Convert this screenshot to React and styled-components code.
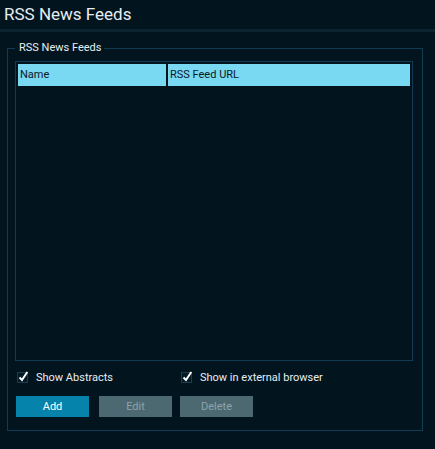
import React from 'react'
import styled, { createGlobalStyle, css } from 'styled-components'

const theme = {
    bg: '#02151f',
    strip: '#0b2430',
    border: '#0f3c52',
    head: '#79d8f2',
    text: '#e6eef2',
    dark: '#0b1826',
    primary: '#0683aa',
    disabled: '#4c6971',
    disabledText: '#8ea3a9',
}

const Global = createGlobalStyle`
    html, body {
        margin: 0;
        background: ${theme.bg};
    }
    body {
        font-family: Roboto, 'Liberation Sans', sans-serif;
        color: ${theme.text};
    }
`

const Page = styled.div`
    width: 435px;
    min-height: 449px;
    background: ${theme.bg};
    overflow: hidden;
`

const Header = styled.header`
    height: 29px;
    line-height: 29px;
    padding-left: 4px;
    font-size: 17px;
    border-bottom: 3px solid ${theme.strip};
`

const Group = styled.fieldset`
    box-sizing: border-box;
    width: 416px;
    margin: 10px 0 0 7px;
    padding: 7px 9px 13px 7px;
    border: 1px solid ${theme.border};
    min-width: 0;

    legend {
        padding: 0 3px 0 4px;
        font-size: 11px;
        line-height: 12px;
    }
`

const Table = styled.div`
    box-sizing: border-box;
    height: 300px;
    border: 1px solid ${theme.border};
    padding: 2px;
`

const HeadRow = styled.div`
    display: grid;
    grid-template-columns: 148px 1fr;
    column-gap: 2px;
    height: 22px;
`

const HeadCell = styled.div`
    background: ${theme.head};
    color: ${theme.dark};
    font-size: 11px;
    line-height: 22px;
    padding-left: 2px;
`

const Options = styled.div`
    display: flex;
    margin: 11px 0 0 2px;
    height: 11px;
`

const Option = styled.label`
    display: flex;
    align-items: center;
    gap: 8px;
    width: ${props => props.$width || 'auto'};
    font-size: 11px;
    line-height: 11px;
`

const Box = styled.span`
    position: relative;
    box-sizing: border-box;
    width: 11px;
    height: 11px;
    border: 1px solid #1c3b4b;
    background: #031a25;

    svg {
        position: absolute;
        left: 0;
        top: -3px;
    }
`

const Buttons = styled.div`
    display: flex;
    gap: 8px;
    margin-top: 13px;
    margin-left: 1px;
`

const Button = styled.button`
    width: 73px;
    height: 21px;
    border: none;
    padding: 0;
    font-family: Roboto, 'Liberation Sans', sans-serif;
    font-size: 11px;
    background: ${theme.disabled};
    color: ${theme.disabledText};
    ${props =>
        props.$primary &&
        css`
            background: ${theme.primary};
            color: #ffffff;
            margin-right: 2px;
        `};
`

const Check = ({ label, width }) => (
    <Option $width={width}>
        <Box>
            <svg width="11" height="12" viewBox="0 0 11 12">
                <path d="M1.5 7.5 L4 10 L9.3 2" fill="none" stroke="#ffffff" strokeWidth="2" />
            </svg>
        </Box>
        {label}
    </Option>
)

export default function App() {
    return (
        <Page>
            <Global />
            <Header>RSS News Feeds</Header>
            <Group>
                <legend>RSS News Feeds</legend>
                <Table>
                    <HeadRow>
                        <HeadCell>Name</HeadCell>
                        <HeadCell>RSS Feed URL</HeadCell>
                    </HeadRow>
                </Table>
                <Options>
                    <Check label="Show Abstracts" width="164px" />
                    <Check label="Show in external browser" />
                </Options>
                <Buttons>
                    <Button $primary>Add</Button>
                    <Button disabled>Edit</Button>
                    <Button disabled>Delete</Button>
                </Buttons>
            </Group>
        </Page>
    )
}
